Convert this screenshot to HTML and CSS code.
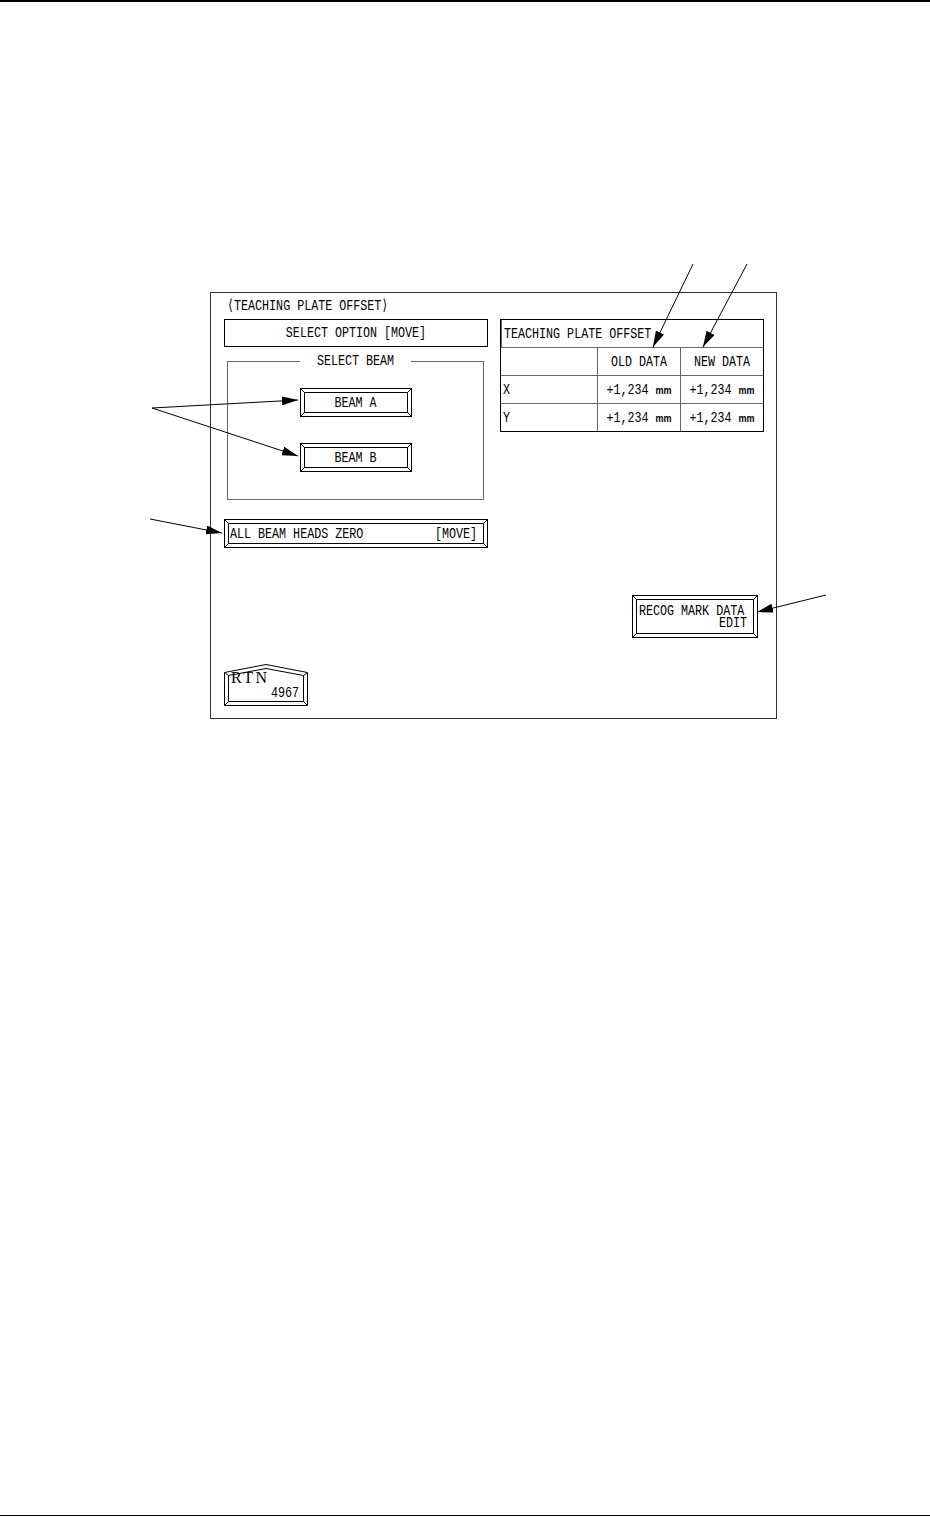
FILE: index.html
```html
<!DOCTYPE html>
<html lang="en">
<head>
<meta charset="utf-8"/>
<title>Teaching Plate Offset</title>

<link rel="stylesheet" href="styles.css">
</head>

<body>
<div class="page">

    <div class="screen">
        <div class="title"><span class="t">⟨TEACHING PLATE OFFSET⟩</span></div>

        <div class="col-left">
            <div class="option"><span class="t">SELECT OPTION [MOVE]</span></div>

            <fieldset class="beams">
                <legend><span class="t">SELECT BEAM</span></legend>
                <div class="btn beam"><span class="t">BEAM A</span></div>
                <div class="btn beam"><span class="t">BEAM B</span></div>
            </fieldset>

            <div class="btn zero">
                <span class="t">ALL BEAM HEADS ZERO</span>
                <span class="t">[MOVE]</span>
            </div>
        </div>

        <div class="col-right">
            <table class="offset">
                <colgroup>
                    <col class="c-name">
                    <col class="c-val">
                    <col class="c-val">
                </colgroup>
                <tr class="head">
                    <th colspan="3"><span class="t">TEACHING PLATE OFFSET</span></th>
                </tr>
                <tr>
                    <td></td>
                    <td class="num"><span class="t">OLD DATA</span></td>
                    <td class="num"><span class="t">NEW DATA</span></td>
                </tr>
                <tr>
                    <td><span class="t">X</span></td>
                    <td class="num"><span class="t">+1,234 <span class="mm">mm</span></span></td>
                    <td class="num"><span class="t">+1,234 <span class="mm">mm</span></span></td>
                </tr>
                <tr>
                    <td><span class="t">Y</span></td>
                    <td class="num"><span class="t">+1,234 <span class="mm">mm</span></span></td>
                    <td class="num"><span class="t">+1,234 <span class="mm">mm</span></span></td>
                </tr>
            </table>
        </div>

        <div class="bottom">
            <div class="rtn">
                <svg class="rtn-shape" viewBox="0 0 84 42" width="84" height="42">
                    <polygon points="0.5,8.5 42,0.5 83.5,8.5 83.5,41.5 0.5,41.5"/>
                    <polygon points="4.5,11.5 42,4.5 79.5,11.5 79.5,37.5 4.5,37.5"/>
                    <path d="M0.5,41.5 L4.5,37.5 M83.5,41.5 L79.5,37.5 M0.5,8.5 L4.5,11.5 M83.5,8.5 L79.5,11.5"/>
                </svg>
                <div class="rtn-label">RTN</div>
                <div class="rtn-code"><span class="t">4967</span></div>
            </div>

            <div class="btn recog">
                <div class="recog-text">
                    <div><span class="t">RECOG MARK DATA</span></div>
                    <div class="right"><span class="t">EDIT</span></div>
                </div>
            </div>
        </div>
    </div>

    <!-- leader lines pointing at the parts of the screen -->
    <svg class="callouts" viewBox="0 2 930 760" width="930" height="760">
        <defs>
            <marker id="head" markerWidth="16" markerHeight="9" refX="16" refY="4.5"
                    orient="auto" markerUnits="userSpaceOnUse">
                <path d="M0,0 L16,4.5 L0,9 z" fill="#000"/>
            </marker>
        </defs>
        <g stroke="#000" stroke-width="1" fill="none" marker-end="url(#head)">
            <line x1="152" y1="408" x2="298" y2="400"/>
            <line x1="152" y1="408" x2="298" y2="456"/>
            <line x1="150" y1="519" x2="222" y2="533"/>
            <line x1="693" y1="264" x2="653" y2="347"/>
            <line x1="747" y1="264" x2="703" y2="347"/>
            <line x1="826" y1="595" x2="757" y2="612"/>
        </g>
    </svg>

</div>
</body>
</html>
```

FILE: styles.css
```css
body {
    margin: 0;
    background: #fff;
}
.page {
    position: relative;
    box-sizing: border-box;
    height: 1516px;
    border-top: 2px solid #000;
    border-bottom: 1px solid #000;
}
.callouts {
    position: absolute;
    top: 0;
    left: 0;
    pointer-events: none;
}

/* the drawn panel */
.screen {
    box-sizing: border-box;
    width: 567px;
    height: 427px;
    margin: 290px 0 0 210px;
    padding: 0 12px 12px 13px;
    border: 1px solid #333;
    display: grid;
    grid-template-columns: 264px 264px;
    grid-template-rows: 26px auto 1fr;
    column-gap: 12px;
    font: 11.7px/14px "Liberation Mono", "DejaVu Sans Mono", monospace;
    color: #000;
}
.t {
    display: inline-block;
    transform: scaleY(1.3);
    white-space: nowrap;
}
.title {
    grid-column: 1 / -1;
    display: flex;
    align-items: center;
    padding-left: 3px;
}

.option {
    box-sizing: border-box;
    height: 28px;
    border: 1px solid #000;
    display: flex;
    align-items: center;
    justify-content: center;
}

.beams {
    min-width: 0;
    margin: 7px 4px 0 3px;
    padding: 20px 0 27px;
    border: 1px solid #666;
    display: flex;
    flex-direction: column;
    align-items: center;
    gap: 26px;
}
.beams legend {
    margin: 0 auto;
    padding: 0 17px;
    line-height: 14px;
}

/* bevelled push button: outer line, inner line and corner mitres */
.btn {
    box-sizing: border-box;
    display: flex;
    align-items: center;
    justify-content: center;
    border: 1px solid #000;
    outline: 1px solid #000;
    outline-offset: -5px;
    background:
        linear-gradient(45deg, transparent 43%, #000 43%, #000 57%, transparent 57%) left top / 5px 5px no-repeat,
        linear-gradient(135deg, transparent 43%, #000 43%, #000 57%, transparent 57%) right top / 5px 5px no-repeat,
        linear-gradient(135deg, transparent 43%, #000 43%, #000 57%, transparent 57%) left bottom / 5px 5px no-repeat,
        linear-gradient(45deg, transparent 43%, #000 43%, #000 57%, transparent 57%) right bottom / 5px 5px no-repeat;
    background-origin: border-box;
}
.beam {
    width: 112px;
    height: 29px;
}
.zero {
    height: 29px;
    margin-top: 19px;
    justify-content: space-between;
    padding: 0 10px 0 5px;
}

.offset {
    width: 264px;
    table-layout: fixed;
    border-collapse: separate;
    border-spacing: 0;
    border: 1px solid #000;
}
.offset col.c-name {
    width: 96px;
}
.offset col.c-val {
    width: 83px;
}
.offset tr {
    height: 28px;
}
.offset tr.head {
    height: 27px;
}
.offset th,
.offset td {
    padding: 0 2px;
    font-weight: normal;
    text-align: left;
    border-top: 1px solid #666;
    border-left: 1px solid #666;
}
.offset tr:first-child th {
    border-top: none;
}
.offset td:first-child {
    border-left: none;
}
.offset td.num {
    text-align: center;
}
.mm {
    font: bold 9px "Liberation Sans", sans-serif;
}

.bottom {
    grid-column: 1 / -1;
    display: flex;
    justify-content: space-between;
    align-items: flex-end;
}
.rtn {
    position: relative;
    box-sizing: border-box;
    width: 84px;
    height: 42px;
    padding: 6px 9px 0 7px;
}
.rtn-shape {
    position: absolute;
    top: 0;
    left: 0;
}
.rtn-shape polygon,
.rtn-shape path {
    fill: none;
    stroke: #000;
    stroke-width: 1;
}
.rtn-label {
    position: relative;
    font: 16px/16px "Liberation Serif", serif;
    letter-spacing: 2.5px;
}
.rtn-code {
    position: relative;
    margin-top: 1px;
    line-height: 12px;
    text-align: right;
}
.recog {
    width: 126px;
    height: 43px;
    margin: 0 6px 68px 0;
    padding: 0 10px 0 6px;
}
.recog-text {
    width: 100%;
    line-height: 12px;
}
.recog-text .right {
    text-align: right;
}
```
